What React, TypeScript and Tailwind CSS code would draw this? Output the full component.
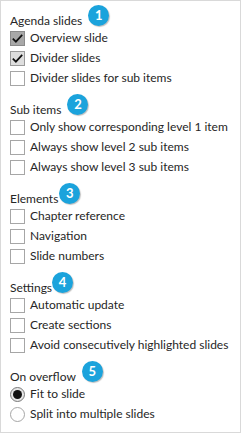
import React from "react";

type Item = { label: string; state?: "checked" | "checkedLight" | "none" };

const Check = ({ state }: { state?: string }) => {
  const bg =
    state === "checked"
      ? "bg-[#a8a8a8] border-[#8a8a8a]"
      : state === "checkedLight"
      ? "bg-[#dedede] border-[#9a9a9a]"
      : "bg-white border-[#a6a6a6]";
  return (
    <div className={`w-[15px] h-[15px] border ${bg} flex items-center justify-center shrink-0`}>
      {state && state !== "none" ? (
        <svg width="13" height="13" viewBox="0 0 13 13">
          <path d="M1.8 6.6 L4.9 9.7 L11.2 2.9" fill="none" stroke="#111" strokeWidth="1.7" />
        </svg>
      ) : null}
    </div>
  );
};

const Radio = ({ on }: { on?: boolean }) => (
  <div
    className={`w-[15px] h-[15px] rounded-full border flex items-center justify-center shrink-0 ${
      on ? "border-[#7a7a7a] bg-[#e6e6e6]" : "border-[#a6a6a6] bg-white"
    }`}
  >
    {on ? <div className="w-[9px] h-[9px] rounded-full bg-[#111]" /> : null}
  </div>
);

const Badge = ({ n, ml }: { n: number; ml: string }) => (
  <span
    className={`relative -top-[6px] ${ml} w-[21px] h-[21px] rounded-full bg-[#1ba3dc] text-white text-[13px] font-bold flex items-center justify-center shadow-[1px_1px_1px_rgba(0,0,0,0.25)]`}
  >
    {n}
  </span>
);

const Header = ({ title, n, ml }: { title: string; n: number; ml: string }) => (
  <div className="flex items-center h-[14px] leading-[14px] whitespace-nowrap">
    <span>{title}</span>
    <Badge n={n} ml={ml} />
  </div>
);

const Row = ({ children, label }: { children: React.ReactNode; label: string }) => (
  <div className="flex items-center h-[20px] gap-[5px] whitespace-nowrap">
    {children}
    <span className="leading-[20px]">{label}</span>
  </div>
);

export default function App() {
  const sections: { title: string; n: number; ml: string; items: Item[] }[] = [
    {
      title: "Agenda slides",
      n: 1,
      ml: "ml-[6px]",
      items: [
        { label: "Overview slide", state: "checked" },
        { label: "Divider slides", state: "checkedLight" },
        { label: "Divider slides for sub items" },
      ],
    },
    {
      title: "Sub items",
      n: 2,
      ml: "ml-[6px]",
      items: [
        { label: "Only show corresponding level 1 item" },
        { label: "Always show level 2 sub items" },
        { label: "Always show level 3 sub items" },
      ],
    },
    {
      title: "Elements",
      n: 3,
      ml: "ml-[1px]",
      items: [{ label: "Chapter reference" }, { label: "Navigation" }, { label: "Slide numbers" }],
    },
    {
      title: "Settings",
      n: 4,
      ml: "ml-[0px]",
      items: [
        { label: "Automatic update" },
        { label: "Create sections" },
        { label: "Avoid consecutively highlighted slides" },
      ],
    },
  ];
  return (
    <div
      className="w-[241px] h-[433px] border border-[#d9d9d9] bg-white text-[12px] text-[#262626] pl-[9px] pt-[13px] flex flex-col gap-[15px] overflow-hidden"
      style={{ fontFamily: 'Lato, "Noto Sans", sans-serif' }}
    >
      {sections.map((s) => (
        <div key={s.n} className="flex flex-col">
          <Header title={s.title} n={s.n} ml={s.ml} />
          {s.items.map((it) => (
            <Row key={it.label} label={it.label}>
              <Check state={it.state} />
            </Row>
          ))}
        </div>
      ))}
      <div className="flex flex-col">
        <Header title="On overflow" n={5} ml="ml-[6px]" />
        <Row label="Fit to slide">
          <Radio on />
        </Row>
        <Row label="Split into multiple slides">
          <Radio />
        </Row>
      </div>
    </div>
  );
}
